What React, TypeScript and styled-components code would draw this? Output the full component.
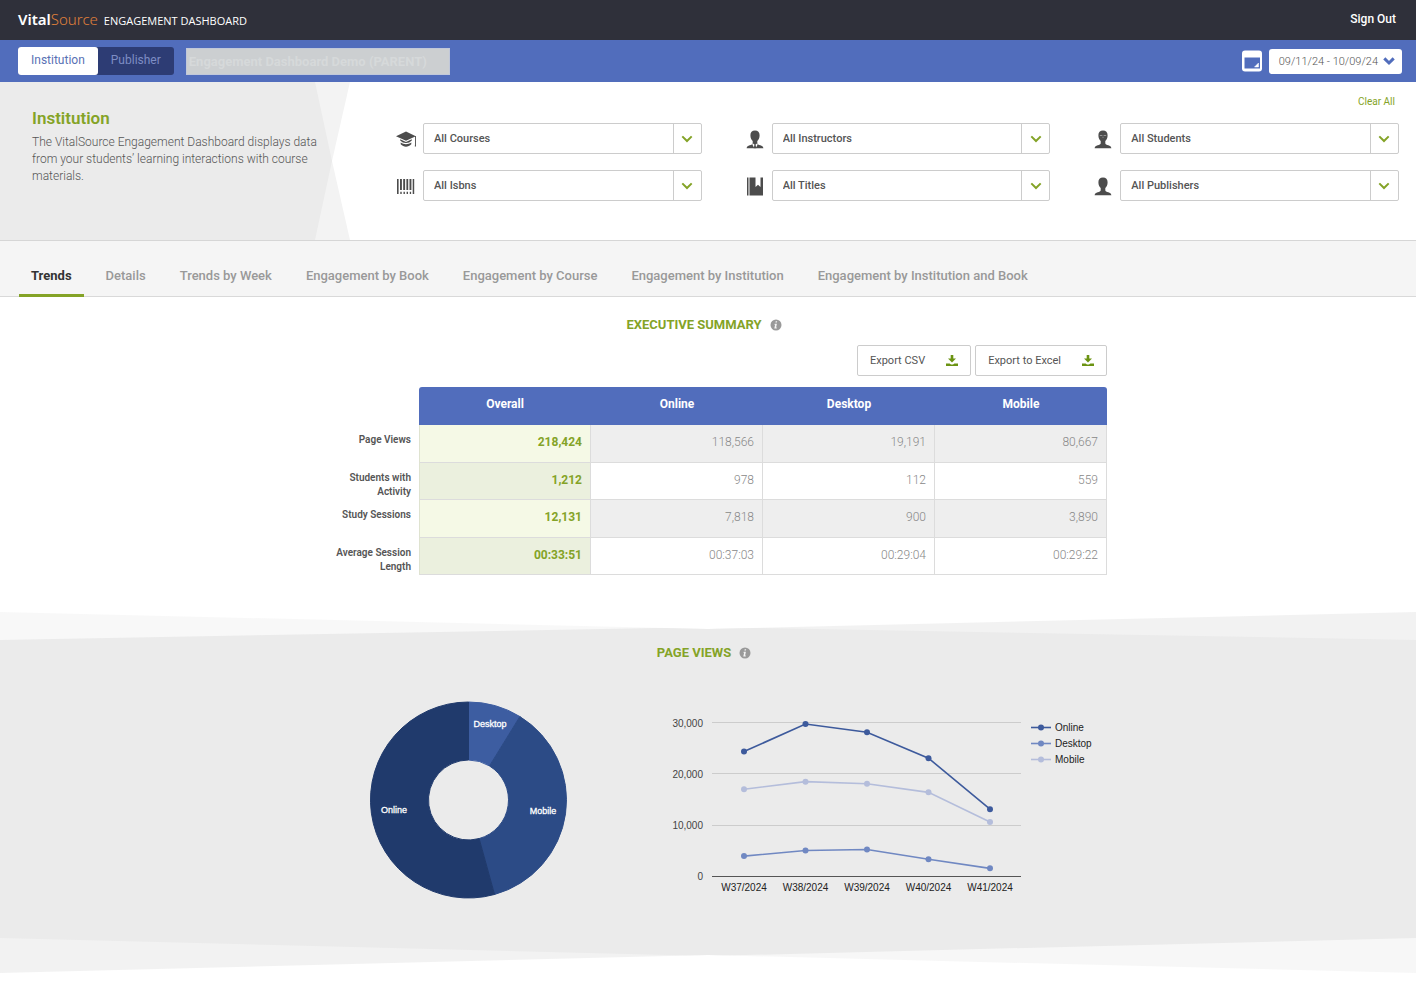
import React from "react";
import styled, { createGlobalStyle } from "styled-components";

const color = {
  ink: "#555555",
  green: "#84a327",
  blue: "#516dbc",
  navy: "#2d3c74",
  panel: "#ebebeb",
  line: "#cccccc",
};

const Global = createGlobalStyle`
  *, *::before, *::after { box-sizing: border-box; }
  body {
    margin: 0;
    background: #fff;
    color: ${color.ink};
    font-family: Roboto, "Liberation Sans", sans-serif;
    font-size: 12px;
  }
  button, select { font: inherit; color: inherit; }
`;

/* ---------- header ---------- */

const Header = styled.header`
  display: flex;
  align-items: center;
  justify-content: space-between;
  height: 40px;
  padding: 0 20px 0 18px;
  background: #2f303a;
  color: #fff;
`;

const Brand = styled.h1`
  display: flex;
  align-items: baseline;
  gap: 6px;
  margin: 0;
  font-family: "Open Sans", "Noto Sans", sans-serif;
  font-weight: 400;
  font-size: 11px;
  line-height: 20px;
`;

const Logo = styled.span`
  font-family: "Noto Sans", "Open Sans", sans-serif;
  font-size: 15px;
  font-weight: 600;
  em {
    font-style: normal;
    font-weight: 300;
    color: #e0803a;
  }
`;

const SignOut = styled.a`
  color: #fff;
  font-weight: 500;
  text-decoration: none;
  line-height: 16px;
  padding-bottom: 3px;
`;

/* ---------- account bar ---------- */

const Bar = styled.div`
  display: flex;
  align-items: center;
  height: 42px;
  padding: 0 14px 0 18px;
  background: ${color.blue};
`;

const Switch = styled.div`
  display: flex;
  border-radius: 3px;
  background: ${color.navy};
`;

const SwitchButton = styled.button<{ $on?: boolean }>`
  height: 28px;
  padding: 0 13px 2px;
  border: 0;
  border-radius: 3px;
  background: ${(p) => (p.$on ? "#fff" : "transparent")};
  color: ${(p) => (p.$on ? "#5871b4" : "#7d8dc4")};
`;

const AccountSelect = styled.select`
  width: 264px;
  height: 27px;
  margin: 0 auto 0 12px;
  padding: 0 2px;
  appearance: none;
  border: 1px solid #c1c8da;
  border-radius: 0;
  background: #cccfd1;
  color: #d6d9da;
  font-size: 13px;
  font-weight: 700;
  opacity: 1;
`;

const DateButton = styled.button`
  display: flex;
  align-items: center;
  gap: 5px;
  height: 25px;
  margin-left: 6px;
  padding: 0 7px 0 10px;
  border: 0;
  border-radius: 3px;
  background: #fff;
  font-size: 11px;
  font-weight: 300;
  white-space: nowrap;
  svg { color: ${color.blue}; }
`;

/* ---------- filters ---------- */

const FilterArea = styled.section`
  display: flex;
  border-bottom: 1px solid #d6d6d6;
`;

const IntroEdge = styled.div`
  flex: none;
  width: 350px;
  background: #f3f3f3;
  clip-path: polygon(0 0, 100% 0, 332px 50%, 100% 100%, 0 100%);
`;

const Intro = styled.div`
  width: 332px;
  height: 100%;
  padding: 26px 8px 0 32px;
  background: ${color.panel};
  clip-path: polygon(0 0, 315px 0, 100% 50%, 315px 100%, 0 100%);
  h2 {
    margin: 0 0 6px;
    color: ${color.green};
    font-size: 17px;
    font-weight: 600;
    line-height: 20px;
  }
  p {
    margin: 0;
    font-weight: 300;
    line-height: 17px;
  }
`;

const Filters = styled.div`
  flex: 1;
  padding: 12px 17px 39px 46px;
`;

const ClearAll = styled.a`
  display: block;
  width: max-content;
  margin: 0 4px 13px auto;
  color: ${color.green};
  font-size: 10px;
  line-height: 16px;
  text-decoration: none;
`;

const FilterGrid = styled.div`
  display: grid;
  grid-template-columns: repeat(3, 1fr);
  gap: 16px 43px;
`;

const FilterLabel = styled.label`
  display: flex;
  align-items: center;
  gap: 7px;
  > svg { flex: none; }
`;

const SelectBox = styled.span`
  display: flex;
  flex: 1;
  height: 31px;
  border: 1px solid ${color.line};
  border-radius: 2px;
  select {
    flex: 1;
    min-width: 0;
    padding: 0 10px;
    appearance: none;
    border: 0;
    background: transparent;
    font-size: 11px;
    font-weight: 500;
  }
`;

const Chevron = styled.span`
  display: grid;
  place-items: center;
  width: 28px;
  border-left: 1px solid ${color.line};
  color: ${color.green};
`;

/* ---------- tabs ---------- */

const Tabs = styled.nav`
  display: flex;
  gap: 10px;
  padding: 26px 19px 0;
  border-bottom: 1px solid #d9d9d9;
  background: #f5f5f5;
`;

const Tab = styled.a<{ $on?: boolean }>`
  margin-bottom: -1px;
  padding: 0 12px 9px;
  border-bottom: 3px solid ${(p) => (p.$on ? color.green : "transparent")};
  color: ${(p) => (p.$on ? "#333" : "#999")};
  font-size: 13px;
  font-weight: ${(p) => (p.$on ? 700 : 500)};
  line-height: 18px;
  text-decoration: none;
  white-space: nowrap;
`;

/* ---------- summary ---------- */

const Column = styled.div`
  width: 100%;
  max-width: 798px;
  margin: 0 auto;
`;

const Heading = styled.h2`
  display: flex;
  align-items: center;
  justify-content: center;
  gap: 8px;
  margin: 0;
  padding-right: 8px;
  color: ${color.green};
  font-size: 13px;
  font-weight: 700;
  line-height: 20px;
  text-transform: uppercase;
`;

const Summary = styled.section`
  padding: 18px 0 37px;
`;

const Exports = styled.div`
  display: flex;
  justify-content: flex-end;
  gap: 4px;
  margin: 10px 0 11px;
`;

const ExportButton = styled.button`
  display: flex;
  align-items: center;
  gap: 21px;
  height: 31px;
  padding: 0 12px;
  border: 1px solid ${color.line};
  border-radius: 2px;
  background: #fff;
  font-size: 11px;
`;

const Table = styled.table`
  width: 100%;
  table-layout: fixed;
  border-collapse: separate;
  border-spacing: 0;

  .labels { width: 110px; }

  thead th {
    height: 38px;
    padding: 0 0 4px;
    background: ${color.blue};
    color: #fff;
    font-size: 12px;
    font-weight: 700;
  }
  thead th:nth-child(2) { border-top-left-radius: 3px; }
  thead th:last-child { border-top-right-radius: 3px; }

  tbody th {
    padding: 8px 8px 0 20px;
    font-size: 10px;
    font-weight: 600;
    line-height: 14px;
    text-align: right;
    vertical-align: top;
  }
  tbody td {
    padding: 8px 8px 0 0;
    border-right: 1px solid #dcdcdc;
    border-bottom: 1px solid #dcdcdc;
    color: #888;
    font-size: 12px;
    font-weight: 300;
    line-height: 18px;
    text-align: right;
    vertical-align: top;
  }
  tbody tr { height: 37px; }
  tbody tr:nth-child(odd) { height: 38px; }
  tbody tr:nth-child(odd) td { background: #eeeeee; }
  tbody td:nth-child(2) {
    border-left: 1px solid #dfe3d0;
    background: #ebf0de;
    color: ${color.green};
    font-weight: 700;
  }
  tbody tr:nth-child(odd) td:nth-child(2) { background: #f5f9e6; }
`;

const Corner = styled.td`
  padding: 0;
`;

/* ---------- page views ---------- */

const WaveTop = styled.div`
  height: 28px;
  background: linear-gradient(90deg, #f8f8f8 50%, #f2f2f2 50%);
  clip-path: polygon(0 0, 50% 17px, 100% 0, 100% 100%, 0 100%);
  div {
    height: 100%;
    background: ${color.panel};
    clip-path: polygon(0 100%, 50% 15px, 100% 100%);
  }
`;

const WaveBottom = styled.div`
  height: 35px;
  margin-bottom: 24px;
  background: linear-gradient(90deg, #f2f2f2 50%, #f7f7f7 50%);
  clip-path: polygon(0 0, 100% 0, 100% 100%, 50% 17px, 0 100%);
  div {
    height: 100%;
    background: ${color.panel};
    clip-path: polygon(0 0, 100% 0, 50% 18px);
  }
`;

const Views = styled.div`
  padding: 3px 0 38px;
  background: ${color.panel};
`;

const Charts = styled.div`
  display: flex;
  gap: 96px;
  margin-top: 37px;
  padding-left: 60px;
  svg { flex: none; }
  text { font-family: "Liberation Sans", Arial, sans-serif; }
`;

/* ---------- icons ---------- */

const DownChevron = ({ width = 2 }: { width?: number }) => (
  <svg width="12" height="12" viewBox="0 0 12 12" fill="none" stroke="currentColor" strokeWidth={width} aria-hidden>
    <path d="M1.3 3.4 6 8l4.700-4.600" />
  </svg>
);

const InfoIcon = () => (
  <svg width="12" height="12" viewBox="0 0 12 12" aria-hidden>
    <circle cx="6" cy="6" r="5.500" fill="#999" />
    <path d="M5.700 2.200h1.500l-.3 1.400H5.400zM4.700 4.800h2.200l-.8 3.600h.8l-.2 1H4.300l.8-3.700h-.7z" fill="#f4f4f4" />
  </svg>
);

const DownloadIcon = () => (
  <svg width="12" height="12" viewBox="0 0 12 12" fill="#6b9312" aria-hidden>
    <path d="M4.700 0h2.600v3.600h2.700L6 7.600 2 3.600h2.700zM0 8.400h3.600L5 9.400h2l1.400-1H12v2.700H0z" />
  </svg>
);

const CalendarIcon = () => (
  <svg width="22" height="22" viewBox="0 0 22 22" aria-hidden>
    <rect x="1" y="0.500" width="20" height="21" rx="3" fill="#fff" />
    <path d="M3.500 7.500h15.500V18.500H3.500z" fill={color.blue} />
    <path d="M17.500 13v4h-4z" fill="#fff" stroke="#fff" strokeWidth="0.500" />
  </svg>
);

const GlyphSvg = ({ children }: { children: React.ReactNode }) => (
  <svg width="20" height="20" viewBox="0 0 20 20" fill="#4c4c4c" aria-hidden>
    {children}
  </svg>
);

const Cap = () => (
  <GlyphSvg>
    <path d="M0 7.200 10 2.500l9.800 4.700L10 11.800zM4.200 10.300 10 13l5.800-2.700v1.200c-1.600 1.700-3.500 2.500-5.800 2.500s-4.200-.8-5.800-2.500zM4.700 13.500c3.300 2.200 7.300 2.200 10.600 0v1.800c-3 3.100-7.600 3.100-10.600 0z" />
    <path d="M19 7h.9v8.500l.1 2h-1.200l.2-2z" />
  </GlyphSvg>
);

const Barcode = () => (
  <GlyphSvg>
    <path d="M1 3h1.600v15H1zM4 3h1.900v11H4zM7.200 3h1.900v11H7.200zM10.400 3h1.800v11h-1.800zM13.500 3h1.900v11h-1.900zM16.700 3h1.500v15h-1.500zM4.300 15.800h1.400V18H4.300zM7.500 15.800h1.400V18H7.500zM10.600 15.800H12V18h-1.400zM13.800 15.800h1.300V18h-1.300z" />
  </GlyphSvg>
);

const bust =
  "M10 1.500c3 0 4.600 1.900 4.600 4.700 0 2.700-1 4.600-2.300 5.900v2.100c0 1.200 1.400 1.500 3 2 1.700.5 2.800 1.100 3.100 3H1.600c.3-1.900 1.400-2.500 3.100-3 1.600-.5 3-.8 3-2v-2.100C6.400 10.800 5.400 8.900 5.400 6.200c0-2.800 1.600-4.700 4.600-4.700z";

const Instructor = () => (
  <GlyphSvg>
    <path d={bust} />
    <path d="M8 14.500 10 16l2-1.500.7 1-2.100 3.700H9.400l-2.100-3.700z" fill="#fff" />
    <path d="M9.500 15.600h1l.8 3.600H8.700z" />
  </GlyphSvg>
);

const Student = () => (
  <GlyphSvg>
    <path d={bust} />
    <path d="M6.800 6h2.600v.7H6.800zM10.600 6h2.600v.7h-2.600zM9.600 7.700h.8v1h-.8z" fill="#aaa" />
  </GlyphSvg>
);

const Publisher = () => (
  <GlyphSvg>
    <path d={bust} />
  </GlyphSvg>
);

const Book = () => (
  <GlyphSvg>
    <path d="M2 1.500h1.500v18H2zM4.500 1.500h6V11l2.500-2.300 2.500 2.300V1.500H18v18H4.500z" />
  </GlyphSvg>
);

/* ---------- data ---------- */

const filters = [
  { label: "All Courses", icon: <Cap /> },
  { label: "All Instructors", icon: <Instructor /> },
  { label: "All Students", icon: <Student /> },
  { label: "All Isbns", icon: <Barcode /> },
  { label: "All Titles", icon: <Book /> },
  { label: "All Publishers", icon: <Publisher /> },
];

const tabs = [
  "Trends",
  "Details",
  "Trends by Week",
  "Engagement by Book",
  "Engagement by Course",
  "Engagement by Institution",
  "Engagement by Institution and Book",
];

const rows = [
  ["Page Views", "218,424", "118,566", "19,191", "80,667"],
  ["Students with Activity", "1,212", "978", "112", "559"],
  ["Study Sessions", "12,131", "7,818", "900", "3,890"],
  ["Average Session Length", "00:33:51", "00:37:03", "00:29:04", "00:29:22"],
];

const slices = [
  { name: "Desktop", value: 19191, fill: "#3d5da1", x: 121, y: 27 },
  { name: "Mobile", value: 80667, fill: "#2c4b86", x: 174, y: 114 },
  { name: "Online", value: 118566, fill: "#203a6c", x: 25, y: 113 },
];

const weeks = ["W37/2024", "W38/2024", "W39/2024", "W40/2024", "W41/2024"];

const series = [
  { name: "Online", stroke: "#3d5a9c", values: [24400, 29800, 28200, 23100, 13100] },
  { name: "Desktop", stroke: "#7088c2", values: [3900, 5000, 5200, 3300, 1500] },
  { name: "Mobile", stroke: "#b4bddb", values: [17000, 18500, 18100, 16400, 10600] },
];

/* ---------- charts ---------- */

const Donut = () => {
  const total = slices.reduce((sum, s) => sum + s.value, 0);
  const at = (angle: number, r: number) =>
    `${(99.5 + r * Math.sin(angle)).toFixed(2)} ${(100 - r * Math.cos(angle)).toFixed(2)}`;
  let start = 0;
  return (
    <svg width="200" height="200" viewBox="0 0 200 200" role="img" aria-label="Page views by platform">
      {slices.map((s) => {
        const end = start + (s.value / total) * Math.PI * 2;
        const large = end - start > Math.PI ? 1 : 0;
        const d = `M${at(start, 98)}A98 98 0 ${large} 1 ${at(end, 98)}L${at(end, 40)}A40 40 0 ${large} 0 ${at(start, 40)}Z`;
        start = end;
        return <path key={s.name} d={d} fill={s.fill} stroke={s.fill} strokeWidth="1" />;
      })}
      {slices.map((s) => (
        <text key={s.name} x={s.x} y={s.y} fill="#fff" stroke="#fff" strokeWidth="0.300" fontSize="9" textAnchor="middle">
          {s.name}
        </text>
      ))}
    </svg>
  );
};

const LineChart = () => {
  const x = (i: number) => 79 + i * 61.5;
  const y = (v: number) => 176 - (v / 10000) * 51;
  return (
    <svg width="442" height="200" viewBox="0 0 442 200" fontSize="10" role="img" aria-label="Page views by week">
      {[30000, 20000, 10000, 0].map((v) => (
        <g key={v}>
          <rect x="47" y={y(v) - (v > 10000 ? 1 : 0)} width="309" height="1" fill={v ? "#cccccc" : "#555555"} />
          <text x="38" y={y(v) + 4} fill="#444" textAnchor="end">
            {v.toLocaleString("en-US")}
          </text>
        </g>
      ))}
      {weeks.map((w, i) => (
        <text key={w} x={x(i)} y="191" fill="#222" textAnchor="middle">
          {w}
        </text>
      ))}
      {series.map((s, n) => (
        <g key={s.name} stroke={s.stroke} fill={s.stroke}>
          <polyline points={s.values.map((v, i) => `${x(i)},${y(v)}`).join(" ")} fill="none" strokeWidth="1.600" />
          {s.values.map((v, i) => (
            <circle key={i} cx={x(i)} cy={y(v)} r="3" stroke="none" />
          ))}
          <path d={`M366 ${27.5 + n * 16}h20`} strokeWidth="1.600" />
          <circle cx="376" cy={27.5 + n * 16} r="3" stroke="none" />
          <text x="390" y={31 + n * 16} fill="#222" stroke="none">
            {s.name}
          </text>
        </g>
      ))}
    </svg>
  );
};

export default function App() {
  return (
    <>
      <Global />
      <Header>
        <Brand>
          <Logo>
            Vital<em>Source</em>
          </Logo>
          ENGAGEMENT DASHBOARD
        </Brand>
        <SignOut href="#signout">Sign Out</SignOut>
      </Header>

      <Bar>
        <Switch>
          <SwitchButton $on>Institution</SwitchButton>
          <SwitchButton>Publisher</SwitchButton>
        </Switch>
        <AccountSelect aria-label="Account" disabled>
          <option>Engagement Dashboard Demo (PARENT)</option>
        </AccountSelect>
        <CalendarIcon />
        <DateButton>
          09/11/24 - 10/09/24
          <DownChevron width={3} />
        </DateButton>
      </Bar>

      <main>
        <FilterArea>
          <IntroEdge>
            <Intro>
              <h2>Institution</h2>
              <p>
                The VitalSource Engagement Dashboard displays data from your students’ learning interactions with course
                materials.
              </p>
            </Intro>
          </IntroEdge>
          <Filters>
            <ClearAll href="#clear">Clear All</ClearAll>
            <FilterGrid>
              {filters.map((f) => (
                <FilterLabel key={f.label}>
                  {f.icon}
                  <SelectBox>
                    <select aria-label={f.label}>
                      <option>{f.label}</option>
                    </select>
                    <Chevron>
                      <DownChevron />
                    </Chevron>
                  </SelectBox>
                </FilterLabel>
              ))}
            </FilterGrid>
          </Filters>
        </FilterArea>

        <Tabs>
          {tabs.map((t, i) => (
            <Tab key={t} href="#tab" $on={i === 0}>
              {t}
            </Tab>
          ))}
        </Tabs>

        <Summary>
          <Column>
            <Heading>
              Executive Summary <InfoIcon />
            </Heading>
            <Exports>
              <ExportButton>
                Export CSV <DownloadIcon />
              </ExportButton>
              <ExportButton>
                Export to Excel <DownloadIcon />
              </ExportButton>
            </Exports>
            <Table>
              <colgroup>
                <col className="labels" />
                <col span={4} />
              </colgroup>
              <thead>
                <tr>
                  <Corner />
                  <th scope="col">Overall</th>
                  <th scope="col">Online</th>
                  <th scope="col">Desktop</th>
                  <th scope="col">Mobile</th>
                </tr>
              </thead>
              <tbody>
                {rows.map(([label, ...cells]) => (
                  <tr key={label}>
                    <th scope="row">{label}</th>
                    {cells.map((c, i) => (
                      <td key={i}>{c}</td>
                    ))}
                  </tr>
                ))}
              </tbody>
            </Table>
          </Column>
        </Summary>

        <section>
          <WaveTop>
            <div />
          </WaveTop>
          <Views>
            <Column>
              <Heading>
                Page Views <InfoIcon />
              </Heading>
              <Charts>
                <Donut />
                <LineChart />
              </Charts>
            </Column>
          </Views>
          <WaveBottom>
            <div />
          </WaveBottom>
        </section>
      </main>
    </>
  );
}
